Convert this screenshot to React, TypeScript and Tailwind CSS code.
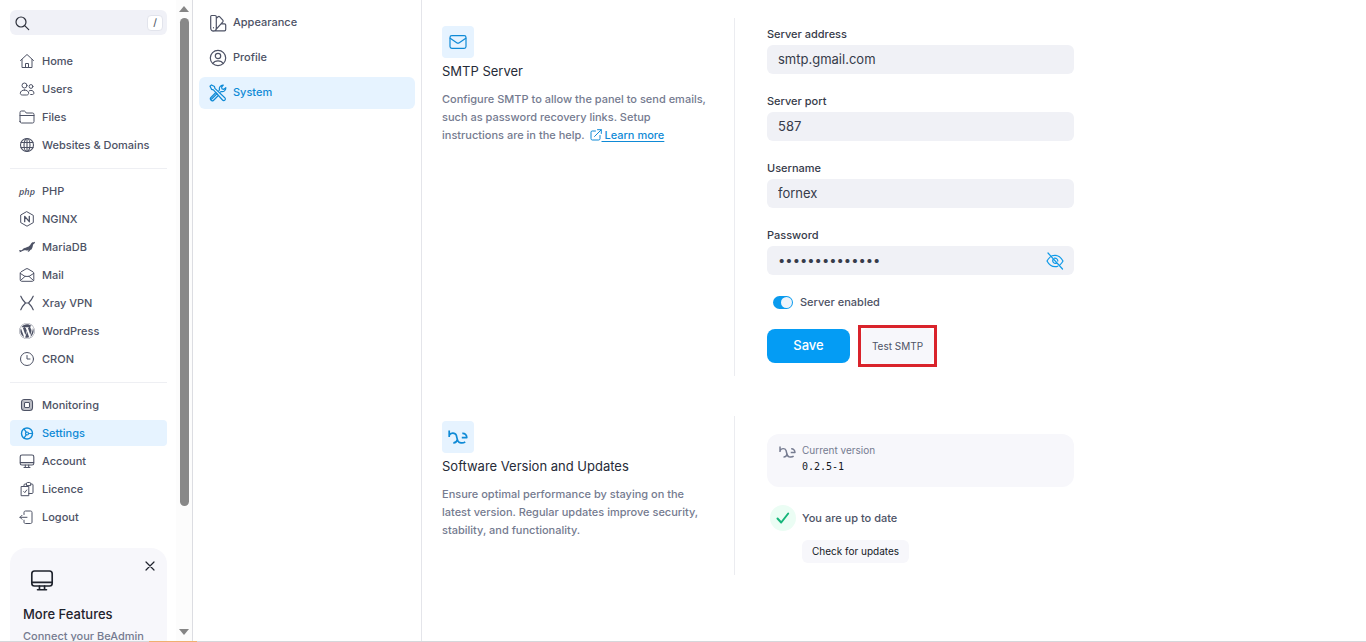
import { useState, type ReactNode } from "react";
import { FaWordpress } from "react-icons/fa";
import { SiMariadb } from "react-icons/si";

type IconProps = { className?: string; children: ReactNode; box?: string; stroke?: number };

function Icon({ className = "size-4", children, box = "0 0 16 16", stroke = 1 }: IconProps) {
  return (
    <svg
      aria-hidden="true"
      viewBox={box}
      className={className}
      fill="none"
      stroke="currentColor"
      strokeWidth={stroke}
      strokeLinecap="round"
      strokeLinejoin="round"
    >
      {children}
    </svg>
  );
}

const HomeIcon = () => (
  <Icon>
    <path d="M1.5 7.5 8 1.5l6.500 6M3 6.500v8h10v-8M6.500 14.500v-4h3v4" />
  </Icon>
);
const UsersIcon = () => (
  <Icon>
    <circle cx="5.500" cy="4.500" r="2.500" />
    <circle cx="12" cy="5.500" r="1.900" />
    <path d="M5.500 9c-2.500 0-4.200 1.500-4.200 3.300 0 1.200 1 1.700 2 1.700h4.400c1 0 2-.5 2-1.700C9.700 10.500 8 9 5.500 9ZM10.300 9.800c.5-.3 1.100-.4 1.700-.4 1.700 0 2.900 1.100 2.900 2.600 0 1.100-.7 1.500-1.600 1.500h-1.600" />
  </Icon>
);
const FilesIcon = () => (
  <Icon>
    <path d="M1 12.500v-9A1.500 1.500 0 0 1 2.500 2h2.700c.5 0 .8.200 1.100.600l.9 1.400h6.300A1.500 1.500 0 0 1 15 5.500v7a1.500 1.500 0 0 1-1.500 1.500h-11A1.500 1.500 0 0 1 1 12.500ZM1 6.500h14" />
  </Icon>
);
const GlobeIcon = () => (
  <Icon stroke={1.1}>
    <circle cx="8" cy="8" r="6.500" />
    <ellipse cx="8" cy="8" rx="3" ry="6.500" />
    <path d="M2 5.500h12M2 10.500h12M8 1.500v13" />
  </Icon>
);
const PhpIcon = () => (
  <span aria-hidden="true" className="font-['Open_Sans',sans-serif] text-[9px] leading-none font-semibold italic">
    php
  </span>
);
const NginxIcon = () => (
  <Icon>
    <path d="M8 .8 14.300 4.400v7.200L8 15.200 1.700 11.600V4.400Z" />
    <path d="M5.700 10.700V5.300l4.600 5.400V5.300" strokeWidth="1.300" />
  </Icon>
);
const MailIcon = () => (
  <Icon>
    <path d="M1.200 6.200c0-.6.3-1 .8-1.300l5-3c.7-.4 1.300-.4 2 0l5 3c.5.300.8.700.8 1.300v6.600c0 .9-.6 1.500-1.500 1.500H2.700c-.9 0-1.500-.6-1.500-1.500ZM1.300 6.400 6 9.400h4l4.700-3M1.500 13.500 6 9.400M14.500 13.500 10 9.400" />
  </Icon>
);
const XrayIcon = () => (
  <Icon stroke={1.200}>
    <path d="M1.800 1.200c.8 2 2 4.200 4.700 6.800-2.700 2.600-4 4.800-4.700 6.800M14.200 1.200c-.8 2-2 4.200-4.700 6.800 2.700 2.600 4 4.800 4.700 6.800M6.500 8h3" />
  </Icon>
);
const ClockIcon = () => (
  <Icon>
    <circle cx="8" cy="8" r="6.500" />
    <path d="M8 4.500V8h3" />
  </Icon>
);
const CpuIcon = () => (
  <Icon stroke={1.100}>
    <rect x="2.500" y="2.500" width="11" height="11" rx="3" />
    <rect x="5.500" y="5.500" width="5" height="5" rx=".8" />
    <rect x="4" y="4" width="8" height="8" rx="1.500" strokeWidth="1.600" strokeOpacity=".45" />
  </Icon>
);
const SettingsIcon = () => (
  <Icon stroke={1.400}>
    <circle cx="8" cy="8.500" r="5.500" />
    <circle cx="8" cy="8.500" r="1.500" strokeWidth="1.200" />
    <path d="M9.500 8.500h4M7.200 7.200 5 3.800M7.200 9.800 5 13.200" strokeWidth="1.200" />
  </Icon>
);
const MonitorIcon = ({ className = "size-4" }: { className?: string }) => (
  <Icon className={className} stroke={1.100}>
    <rect x="1.200" y="2" width="13.600" height="10" rx="1.800" />
    <path d="M1.400 9.600h13.200M6.300 12v2.300M9.700 12v2.300M5 14.500h6" />
  </Icon>
);
const LicenceIcon = () => (
  <Icon>
    <path d="M2.500 5.500h7.300v9.200H2.500ZM5 5.500V4c0-.6.4-1 1-1h1.500M11.700 3h1.300c.6 0 1 .4 1 1v7.500c0 .6-.4 1-1 1H9.800M7.500 4.200V2.500c0-.6.4-1 1-1h2.200c.6 0 1 .4 1 1v1.700ZM4.700 10.500l1.100 1.100 1.900-2.600" />
  </Icon>
);
const LogoutIcon = () => (
  <Icon>
    <path d="M5 5.500V3.500C5 2.500 5.700 2 6.500 2h5c1 0 1.500.6 1.500 1.500v9.500c0 1-.6 1.500-1.500 1.500h-5c-1 0-1.500-.6-1.500-1.500v-1.800M8 8.300H1M3 6.300 1 8.300l2 2" />
  </Icon>
);
const SwatchIcon = () => (
  <Icon box="0 0 18 18" className="size-[18px]" stroke={1.200}>
    <path d="M2.500 1.500H6c.8 0 1.300.5 1.300 1.300v11.500a2.700 2.700 0 0 1-5.600 0V2.500c0-.6.3-1 .8-1ZM7.300 4.200l1.800-1.500c.6-.5 1.200-.4 1.700.1l3 3.300c.5.600.5 1.200 0 1.800l-6.700 7.500M12.200 9.800h3.300c.7 0 1.200.5 1.200 1.200v4.500c0 .8-.5 1.300-1.200 1.300h-11" />
    <path d="M4.500 13.700v.1" />
  </Icon>
);
const ProfileIcon = () => (
  <Icon box="0 0 18 18" className="size-[18px]" stroke={1.200}>
    <circle cx="9" cy="9" r="7.700" />
    <circle cx="9" cy="7" r="2.700" />
    <path d="M3.800 14.500c1-1.700 2.900-2.700 5.200-2.700s4.200 1 5.200 2.700" />
  </Icon>
);
const ToolsIcon = () => (
  <Icon box="0 0 18 18" className="size-[18px]" stroke={1.200}>
    <path d="M1 2.300 2.500.9l3 1.700.4 1.800 9.900 9.300c.8.8.8 1.700.1 2.400s-1.700.7-2.400-.1L4.400 5.900l-1.800-.5Z" />
    <path d="m9.900 6.600.6-.7c-.7-2.500 1-4.900 3.800-4.700L12.600 3l.4 1.900 1.900.4 1.900-1.700c.3 2.800-2.200 4.600-4.700 3.900l-.6.600M8 9.700l-5.600 5.500M9.600 11.300l-5 4.900c-.8.800-1.900.8-2.700 0s-.8-1.900 0-2.700l5-5" />
  </Icon>
);
const EnvelopeIcon = () => (
  <Icon box="0 0 18 18" className="size-[18px]" stroke={1.200}>
    <rect x="1" y="2.700" width="16" height="12.600" rx="1.800" />
    <path d="M1.200 5.300 7.700 9.700c.9.600 1.700.6 2.600 0l6.500-4.400" />
  </Icon>
);
const BrandMark = ({ className }: { className: string }) => (
  <Icon box="0 0 20 14" className={className} stroke={1.700}>
    <path
      strokeLinecap="butt"
      d="M1.200.5v6.600M1.200 5.400C2.200 2.600 7 2 8.300 5.300 9.200 8 9 12 12 12.700c1.800.4 3.900.2 5.200-.9M5.300 12.900c2.200.1 3.600-1.400 4.200-3.600M14.300 3.300c2.600-.2 4.500 1.500 4.500 4.300h-5"
    />
  </Icon>
);
const EyeOffIcon = () => (
  <Icon box="0 0 20 20" className="size-5" stroke={1.200}>
    <path d="M7 4.800c1-.4 2-.5 3-.5 3.500 0 6 2 8 5.700-.8 1.500-1.700 2.700-2.800 3.600M12.800 15.200c-.9.400-1.800.5-2.800.5-3.500 0-6-2-8-5.700.8-1.600 1.900-2.900 3.100-3.900M8.200 8.100A2.800 2.800 0 0 0 12 12M9.500 7.200c1.800-.2 3.300 1.100 3.300 2.900M3 2l14.500 16" />
  </Icon>
);
const ExternalIcon = () => (
  <svg aria-hidden="true" viewBox="0 0 12 12" className="inline size-3 align-[-2px]" fill="none" stroke="currentColor" strokeLinecap="round" strokeLinejoin="round">
    <path d="M5.500 2H2.300C1.400 2 1 2.500 1 3.200v6.500c0 .8.500 1.300 1.300 1.300h6.400c.8 0 1.300-.5 1.300-1.300V6.500M7.500.7h3.800v3.800M11.200.8 4.500 7.500" />
  </svg>
);

type Item = { label: string; icon: ReactNode; active?: boolean };

const groups: Item[][] = [
  [
    { label: "Home", icon: <HomeIcon /> },
    { label: "Users", icon: <UsersIcon /> },
    { label: "Files", icon: <FilesIcon /> },
    { label: "Websites & Domains", icon: <GlobeIcon /> },
  ],
  [
    { label: "PHP", icon: <PhpIcon /> },
    { label: "NGINX", icon: <NginxIcon /> },
    { label: "MariaDB", icon: <SiMariadb className="size-4" aria-hidden="true" /> },
    { label: "Mail", icon: <MailIcon /> },
    { label: "Xray VPN", icon: <XrayIcon /> },
    { label: "WordPress", icon: <FaWordpress className="size-4" aria-hidden="true" /> },
    { label: "CRON", icon: <ClockIcon /> },
  ],
  [
    { label: "Monitoring", icon: <CpuIcon /> },
    { label: "Settings", icon: <SettingsIcon />, active: true },
    { label: "Account", icon: <MonitorIcon /> },
    { label: "Licence", icon: <LicenceIcon /> },
    { label: "Logout", icon: <LogoutIcon /> },
  ],
];

const tabs: Item[] = [
  { label: "Appearance", icon: <SwatchIcon /> },
  { label: "Profile", icon: <ProfileIcon /> },
  { label: "System", icon: <ToolsIcon />, active: true },
];

function Sidebar() {
  return (
    <aside className="flex w-[193px] shrink-0 border-r border-[#dcdde2]">
      <div className="min-w-0 flex-1 overflow-hidden pt-[10px] pr-[9px] pl-[10px]">
        <label className="flex h-[25px] items-center rounded-md bg-[#f0f1f7] pr-1 pl-1 text-[#2b2f3a]">
          <Icon className="size-4 shrink-0" stroke={1.200}>
            <circle cx="7" cy="7" r="5" />
            <path d="m10.700 10.700 4 4" />
          </Icon>
          <input aria-label="Search" className="min-w-0 flex-1 bg-transparent px-2 outline-none" />
          <kbd className="flex size-4 items-center justify-center rounded-sm border border-[#e2e4ec] bg-white font-['Inter',sans-serif] text-[10px] text-[#555a68]">
            /
          </kbd>
        </label>
        <nav aria-label="Main" className="mt-[13px]">
          {groups.map((group, i) => (
            <ul
              key={i}
              className="flex flex-col gap-[2px] border-[#eeeff3] not-first:mt-[10px] not-first:border-t not-first:pt-[9px]"
            >
              {group.map((item) => (
                <li key={item.label}>
                  <a
                    href="#"
                    aria-current={item.active ? "page" : undefined}
                    className={`flex h-[26px] items-center gap-[6px] rounded-sm px-2 ${item.active ? "bg-[#e6f3ff] text-[#0f8ad6]" : ""}`}
                  >
                    <span className="flex w-[18px] justify-center">{item.icon}</span>
                    {item.label}
                  </a>
                </li>
              ))}
            </ul>
          ))}
        </nav>
        <section className="relative mt-[18px] h-40 rounded-2xl bg-[#f7f7fb] px-[13px] pt-5 text-[#1f232d]">
          <button type="button" aria-label="Close" className="absolute top-3 right-[11px]">
            <Icon className="size-3" box="0 0 12 12" stroke={1.200}>
              <path d="m2 2 8 8M10 2l-8 8" />
            </Icon>
          </button>
          <MonitorIcon className="ml-[7px] size-6" />
          <h2 className="mt-3 text-[13px] leading-5 font-medium">More Features</h2>
          <p className="mt-1 leading-4 text-[#757b90]">Connect your BeAdmin</p>
        </section>
      </div>
      <div aria-hidden="true" className="flex w-4 flex-col items-center bg-[#fcfcfc] py-[6px] text-[#858585]">
        <svg viewBox="0 0 10 6" className="h-[6px] w-[10px]" fill="currentColor">
          <path d="M0 6 5 0l5 6Z" />
        </svg>
        <div className="mt-[6px] h-[488px] w-[9px] rounded-full bg-[#888888]" />
        <svg viewBox="0 0 10 6" className="mt-auto h-[6px] w-[10px]" fill="currentColor">
          <path d="M0 0h10L5 6Z" />
        </svg>
      </div>
    </aside>
  );
}

function SectionNote({ icon, title, children }: { icon: ReactNode; title: string; children: ReactNode }) {
  return (
    <div className="w-[293px] shrink-0 border-r border-[#ebecf0] pr-6">
      <div className="flex size-8 items-center justify-center rounded-sm bg-[#e6f3ff] text-[#0f8ad6]">{icon}</div>
      <h2 className="mt-1 text-[13px] leading-[18px] font-normal text-[#262b38]">{title}</h2>
      <p className="mt-[10px] leading-[18px] text-[#757b90]">{children}</p>
    </div>
  );
}

function Field({ id, label, type = "text", value }: { id: string; label: string; type?: string; value: string }) {
  return (
    <div className="mb-[18px]">
      <label htmlFor={id} className="block leading-[18px] text-[#363b4a]">
        {label}
      </label>
      <div className="mt-[2px] flex h-[29px] items-center rounded-md bg-[#f0f1f6] pr-[9px] pl-[11px]">
        <input
          id={id}
          type={type}
          defaultValue={value}
          className="min-w-0 flex-1 bg-transparent text-[13px] font-normal text-[#363b4a] outline-none"
        />
        {type === "password" && (
          <button type="button" aria-label="Show password" className="text-[#0f9ae8]">
            <EyeOffIcon />
          </button>
        )}
      </div>
    </div>
  );
}

export default function App() {
  const [enabled, setEnabled] = useState(true);
  return (
    <div className="flex h-screen flex-col overflow-hidden bg-white font-['Inter',sans-serif] text-[11px] font-medium text-[#4d5265]">
      <div className="flex min-h-0 flex-1">
        <Sidebar />
        <nav aria-label="Settings" className="flex w-[229px] shrink-0 flex-col gap-[3px] border-r border-[#e4e5ea] px-[6px] pt-[7px]">
          {tabs.map((tab) => (
            <a
              key={tab.label}
              href="#"
              aria-current={tab.active ? "page" : undefined}
              className={`flex h-8 items-center gap-[6px] rounded-md px-[10px] pb-px ${tab.active ? "bg-[#e6f3ff] text-[#0f8ad6]" : ""}`}
            >
              {tab.icon}
              {tab.label}
            </a>
          ))}
        </nav>
        <main className="min-w-0 flex-1 pt-[18px] pl-5">
          <section className="flex h-[358px] *:first:pt-2">
            <SectionNote icon={<EnvelopeIcon />} title="SMTP Server">
              Configure SMTP to allow the panel to send emails, such as password recovery links. Setup instructions are
              in the help.{" "}
              <a href="#" className="ml-[2px] text-[#0f8ad6] underline underline-offset-2">
                <ExternalIcon /> Learn more
              </a>
            </SectionNote>
            <form className="ml-8 w-[307px] pt-[7px]" onSubmit={(e) => e.preventDefault()}>
              <Field id="address" label="Server address" value="smtp.gmail.com" />
              <Field id="port" label="Server port" value="587" />
              <Field id="username" label="Username" value="fornex" />
              <Field id="password" label="Password" type="password" value="fourteen-chars" />
              <label className="mt-5 ml-[6px] flex h-[14px] items-center gap-[7px]">
                <input
                  type="checkbox"
                  role="switch"
                  checked={enabled}
                  onChange={(e) => setEnabled(e.target.checked)}
                  className="peer sr-only"
                />
                <span className="flex h-[13px] w-5 items-center rounded-full bg-[#b9bdca] p-px peer-checked:justify-end peer-checked:bg-[#0a9bee]">
                  <span className="size-[11px] rounded-full bg-[#eef4fb]" />
                </span>
                Server enabled
              </label>
              <div className="mt-4 flex items-center gap-2">
                <button type="submit" className="h-[34px] w-[83px] rounded-lg bg-[#049cf4] text-[13px] text-white">
                  Save
                </button>
                <div className="border-3 border-[#d9232b]">
                  <button type="button" className="h-9 w-[73px] rounded-lg bg-[#f7f7fb] text-[10px] font-normal">
                    Test SMTP
                  </button>
                </div>
              </div>
            </form>
          </section>
          <section className="mt-10 flex h-[159px] *:first:pt-[5px]">
            <SectionNote icon={<BrandMark className="h-[14px] w-5" />} title="Software Version and Updates">
              Ensure optimal performance by staying on the latest version. Regular updates improve security, stability,
              and functionality.
            </SectionNote>
            <div className="ml-8 w-[307px] pt-[18px]">
              <div className="flex h-[53px] gap-[6px] rounded-xl bg-[#f7f7fb] pt-2 pl-3 text-[#757b90]">
                <BrandMark className="mt-1 h-3 w-[17px]" />
                <div>
                  <p className="text-[10px] leading-4 font-normal">Current version</p>
                  <p className="font-['DejaVu_Sans_Mono',monospace] text-[10px] leading-[17px] text-[#14171f]">0.2.5-1</p>
                </div>
              </div>
              <div className="mt-[18px] ml-[3px] flex items-center gap-[6px]">
                <span className="flex size-[26px] items-center justify-center rounded-full bg-[#ebfdf4] text-[#16b57a]">
                  <Icon className="size-[14px]" box="0 0 14 14" stroke={2}>
                    <path d="m1.500 7.500 3.700 4 7-9" />
                  </Icon>
                </span>
                You are up to date
              </div>
              <button type="button" className="mt-[9px] ml-[35px] h-[23px] rounded-md bg-[#f7f7fb] px-[10px] text-[10px] font-normal text-[#14171f]">
                Check for updates
              </button>
            </div>
          </section>
        </main>
      </div>
      <div aria-hidden="true" className="flex h-px shrink-0 bg-[#d6d7db]">
        <div className="ml-[149px] h-px w-12 bg-[#f0b070]" />
      </div>
    </div>
  );
}
